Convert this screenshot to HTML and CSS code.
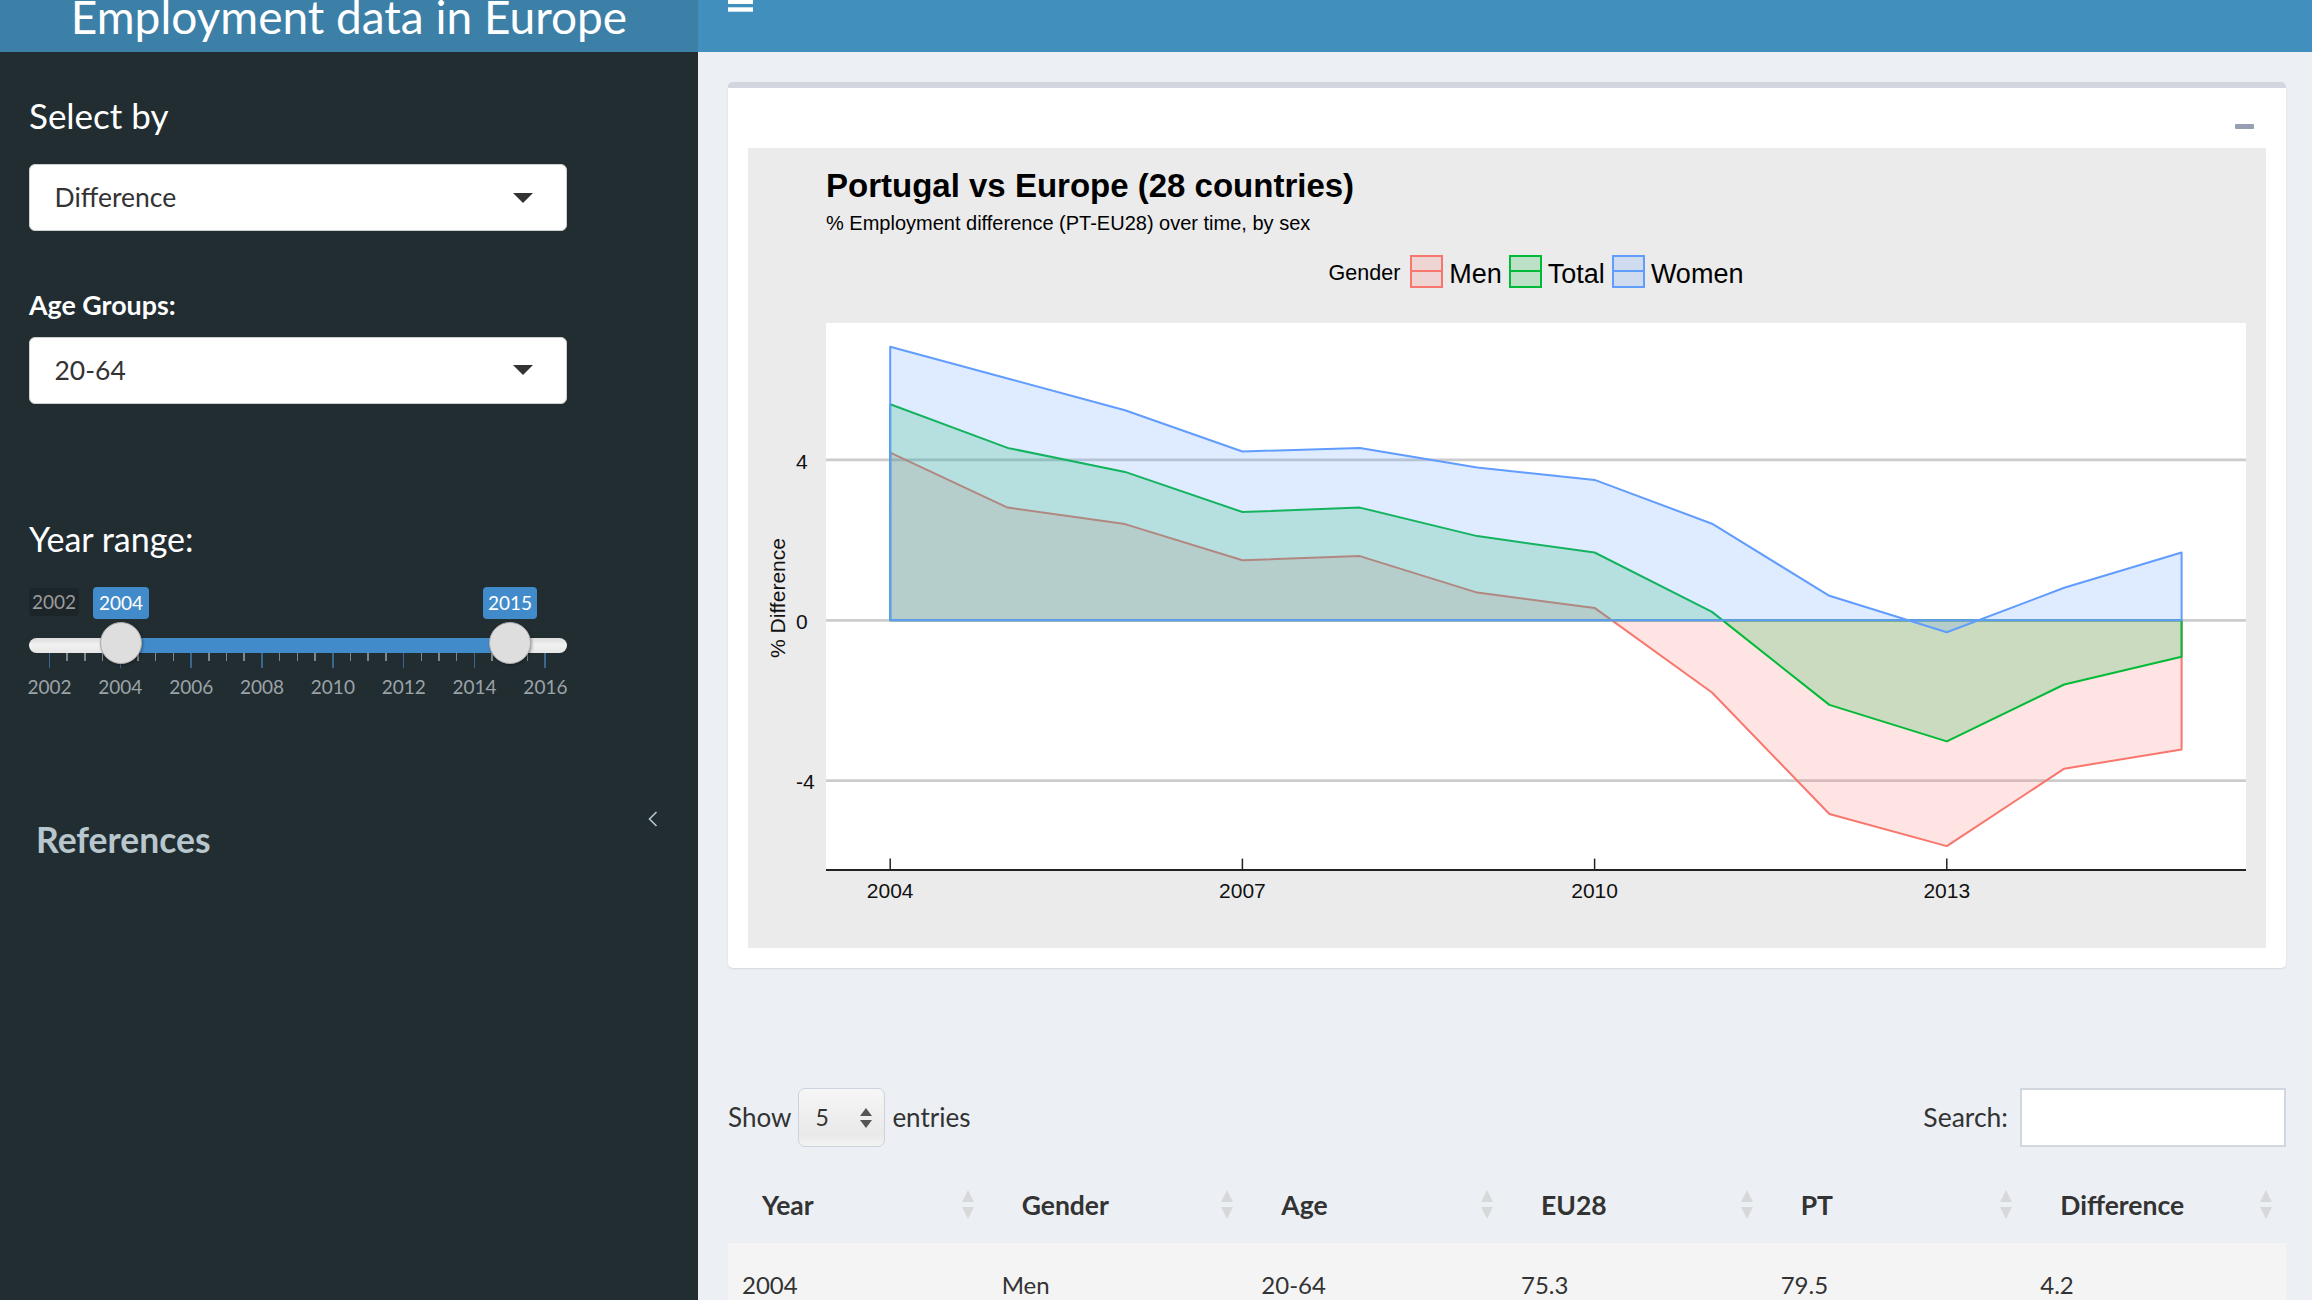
FILE: index.html
```html
<!DOCTYPE html>
<html lang="en">
<head>
<meta charset="utf-8">
<title>Employment data in Europe</title>
<link rel="stylesheet" href="styles.css">
</head>
<body>
<header class="topbar">
  <div class="logo"><span class="logo-text">Employment data in Europe</span></div>
  <nav class="navbar">
    <a class="toggle"><svg width="25" height="12" viewBox="0 0 25 12"><rect x="0" y="0" width="25" height="4" fill="#fff"/><rect x="0" y="7.3" width="25" height="4.4" fill="#fff"/></svg></a>
  </nav>
</header>
<div class="main">
  <aside class="sidebar">
    <div class="lbl-big">Select by</div>
    <div class="select sel-1"><span>Difference</span><span class="caret"></span></div>
    <div class="lbl-bold">Age Groups:</div>
    <div class="select sel-2"><span>20-64</span><span class="caret"></span></div>
    <div class="lbl-range">Year range:</div>
    <div class="slider">
      <span class="irs-min">2002</span>
      <span class="irs-val irs-from">2004</span>
      <span class="irs-val irs-to">2015</span>
      <div class="irs-line"></div>
      <div class="irs-bar"></div>
      <span class="irs-handle h-from"></span>
      <span class="irs-handle h-to"></span>
      <div class="irs-grid">
        <i class="maj"></i><i></i><i></i><i></i>
        <i class="maj"></i><i></i><i></i><i></i>
        <i class="maj"></i><i></i><i></i><i></i>
        <i class="maj"></i><i></i><i></i><i></i>
        <i class="maj"></i><i></i><i></i><i></i>
        <i class="maj"></i><i></i><i></i><i></i>
        <i class="maj"></i><i></i><i></i><i></i>
        <i class="maj"></i>
      </div>
      <div class="irs-grid-text">
        <span>2002</span><span>2004</span><span>2006</span><span>2008</span><span>2010</span><span>2012</span><span>2014</span><span>2016</span>
      </div>
    </div>
    <div class="menu-item">
      <span class="menu-text">References</span>
      <svg class="chev" width="10" height="16" viewBox="0 0 10 16"><polyline points="8.5,1 1.5,8 8.5,15" fill="none" stroke="#b8c7ce" stroke-width="1.6"/></svg>
    </div>
  </aside>
  <main class="content">
    <section class="box">
      <div class="box-header"><span class="btn-minus"></span></div>
      <div class="box-body">
        <div class="plot">
          <div class="plot-title">Portugal vs Europe (28 countries)</div>
          <div class="plot-subtitle">% Employment difference (PT-EU28) over time, by sex</div>
          <div class="legend">
            <span class="legend-title">Gender</span>
            <span class="key key-men"></span><span class="legend-label">Men</span>
            <span class="key key-total"></span><span class="legend-label">Total</span>
            <span class="key key-women"></span><span class="legend-label">Women</span>
          </div>
          <svg class="chart" width="1518" height="648" viewBox="0 0 1518 648">
            <rect x="78" y="23" width="1420" height="547" fill="#ffffff"/>
            <g stroke="#cccccc" stroke-width="2.7">
              <line x1="78" x2="1498" y1="159.9" y2="159.9"/>
              <line x1="78" x2="1498" y1="320.3" y2="320.3"/>
              <line x1="78" x2="1498" y1="480.7" y2="480.7"/>
            </g>
            <g stroke-width="2" stroke-linejoin="round">
              <polygon fill="#F8766D" fill-opacity="0.2" stroke="#F8766D" points="142.2,320.3 142.2,152.7 259.6,207.6 377,224.1 494.4,260.2 611.8,256.1 729.2,292.6 846.6,307.9 964,392.5 1081.4,514 1198.8,546.1 1316.2,468.7 1433.6,449.4 1433.6,320.3"/>
              <polygon fill="#00BA38" fill-opacity="0.2" stroke="#00BA38" points="142.2,320.3 142.2,104.2 259.6,147.9 377,171.9 494.4,212 611.8,207.6 729.2,236.1 846.6,252.5 964,311.9 1081.4,404.9 1198.8,441.4 1316.2,384.5 1433.6,356.8 1433.6,320.3"/>
              <polygon fill="#619CFF" fill-opacity="0.2" stroke="#619CFF" points="142.2,320.3 142.2,46.8 259.6,78.5 377,110.2 494.4,151.5 611.8,147.9 729.2,167.5 846.6,179.9 964,223.7 1081.4,295.8 1198.8,332.3 1316.2,287.8 1433.6,252.5 1433.6,320.3"/>
            </g>
            <line x1="78" x2="1498" y1="570" y2="570" stroke="#222" stroke-width="2"/>
            <g stroke="#222" stroke-width="1.5">
              <line x1="142.2" x2="142.2" y1="558.6" y2="570"/>
              <line x1="494.4" x2="494.4" y1="558.6" y2="570"/>
              <line x1="846.6" x2="846.6" y1="558.6" y2="570"/>
              <line x1="1198.8" x2="1198.8" y1="558.6" y2="570"/>
            </g>
            <g class="axis-text" text-anchor="middle">
              <text x="142.2" y="598">2004</text>
              <text x="494.4" y="598">2007</text>
              <text x="846.6" y="598">2010</text>
              <text x="1198.8" y="598">2013</text>
            </g>
            <g class="axis-text" text-anchor="start">
              <text x="48" y="168.6">4</text>
              <text x="48" y="329">0</text>
              <text x="48" y="489.4">-4</text>
            </g>
            <text class="axis-text" text-anchor="middle" transform="translate(37,298) rotate(-90)">% Difference</text>
          </svg>
        </div>
      </div>
    </section>

    <div class="dt-top">
      <div class="dt-length">
        <span>Show</span>
        <span class="dt-select"><span>5</span><svg width="12" height="20" viewBox="0 0 12 20"><path d="M6 0 L12 8 L0 8 Z" fill="#555"/><path d="M0 12 L12 12 L6 20 Z" fill="#555"/></svg></span>
        <span>entries</span>
      </div>
      <div class="dt-search">
        <span>Search:</span>
        <span class="dt-input"></span>
      </div>
    </div>

    <table class="dt">
      <thead>
        <tr>
          <th><div class="th-in"><span>Year</span><svg class="sort" width="12" height="30" viewBox="0 0 12 30"><path d="M6 0 L12 12 L0 12 Z"/><path d="M0 17 L12 17 L6 29 Z"/></svg></div></th>
          <th><div class="th-in"><span>Gender</span><svg class="sort" width="12" height="30" viewBox="0 0 12 30"><path d="M6 0 L12 12 L0 12 Z"/><path d="M0 17 L12 17 L6 29 Z"/></svg></div></th>
          <th><div class="th-in"><span>Age</span><svg class="sort" width="12" height="30" viewBox="0 0 12 30"><path d="M6 0 L12 12 L0 12 Z"/><path d="M0 17 L12 17 L6 29 Z"/></svg></div></th>
          <th><div class="th-in"><span>EU28</span><svg class="sort" width="12" height="30" viewBox="0 0 12 30"><path d="M6 0 L12 12 L0 12 Z"/><path d="M0 17 L12 17 L6 29 Z"/></svg></div></th>
          <th><div class="th-in"><span>PT</span><svg class="sort" width="12" height="30" viewBox="0 0 12 30"><path d="M6 0 L12 12 L0 12 Z"/><path d="M0 17 L12 17 L6 29 Z"/></svg></div></th>
          <th><div class="th-in"><span>Difference</span><svg class="sort" width="12" height="30" viewBox="0 0 12 30"><path d="M6 0 L12 12 L0 12 Z"/><path d="M0 17 L12 17 L6 29 Z"/></svg></div></th>
        </tr>
      </thead>
      <tbody>
        <tr><td>2004</td><td>Men</td><td>20-64</td><td>75.3</td><td>79.5</td><td>4.2</td></tr>
      </tbody>
    </table>
  </main>
</div>
</body>
</html>
```

FILE: styles.css
```css
html, body {
  margin: 0;
  padding: 0;
}
body {
  width: 2312px;
  height: 1300px;
  overflow: hidden;
  background: #ecf0f5;
  font-family: Lato, "Open Sans", sans-serif;
  color: #333;
}

/* ---------- top bar ---------- */
.topbar {
  display: flex;
  height: 52px;
  overflow: hidden;
}
.logo {
  width: 698px;
  flex: none;
  background: #3c80a8;
  display: flex;
  justify-content: center;
  align-items: flex-start;
}
.logo-text {
  color: #fff;
  font-size: 46px;
  line-height: 1.2;
  margin-top: -11px;
  white-space: nowrap;
}
.navbar {
  flex: 1;
  background: #418fbc;
  padding-left: 30px;
}
.toggle svg {
  display: block;
}

/* ---------- layout ---------- */
.main {
  display: flex;
  height: 1248px;
}
.sidebar {
  width: 698px;
  flex: none;
  box-sizing: border-box;
  background: #222d32;
  padding: 41.5px 0 0 29px;
  color: #fff;
}
.content {
  flex: 1;
  min-width: 0;
  padding: 30px 26px 0 30px;
}

/* ---------- sidebar ---------- */
.lbl-big {
  font-size: 35px;
  line-height: 1.2;
}
.lbl-bold {
  font-size: 26.8px;
  font-weight: 700;
  line-height: 1.2;
  margin-top: 58.4px;
}
.lbl-range {
  font-size: 34px;
  line-height: 1.2;
  margin-top: 114.6px;
}
.select {
  width: 538px;
  height: 67px;
  box-sizing: border-box;
  background: #fff;
  border: 1.5px solid #cfcfcf;
  border-radius: 6px;
  display: flex;
  align-items: center;
  justify-content: space-between;
  padding: 0 33.5px 0 24.5px;
  color: #333;
  font-size: 26.5px;
  line-height: 1.2;
}
.sel-1 {
  margin-top: 28.5px;
}
.sel-2 {
  margin-top: 15.4px;
}
.caret {
  width: 0;
  height: 0;
  border-left: 10px solid transparent;
  border-right: 10px solid transparent;
  border-top: 10px solid #333;
}

/* slider */
.slider {
  position: relative;
  width: 538px;
  height: 125px;
  margin-top: 21.2px;
  padding-top: 72px;
  box-sizing: border-box;
}
.irs-min, .irs-val {
  position: absolute;
  top: 6px;
  height: 32px;
  box-sizing: border-box;
  border-radius: 4px;
  font-size: 19px;
  line-height: 32px;
  text-align: center;
}
.irs-min {
  left: 0;
  top: 7px;
  height: 28px;
  line-height: 28px;
  width: 50px;
  background: rgba(0, 0, 0, 0.16);
  color: #9b9b9b;
}
.irs-val {
  background: #428bca;
  color: #fff;
}
.irs-from {
  left: 64px;
  width: 56px;
}
.irs-to {
  left: 454px;
  width: 54px;
}
.irs-line {
  position: absolute;
  left: 0;
  right: 0;
  top: 57px;
  height: 15px;
  border-radius: 8px;
  background: linear-gradient(#dcdcdc, #f2f2f2 45%, #e6e6e6);
}
.irs-bar {
  position: absolute;
  left: 91.5px;
  width: 389.5px;
  top: 57px;
  height: 15px;
  background: #428bca;
}
.irs-handle {
  position: absolute;
  top: 41px;
  width: 42px;
  height: 42px;
  box-sizing: border-box;
  border-radius: 50%;
  background: #dedede;
  border: 1.5px solid #ababab;
  box-shadow: 1px 1px 3px rgba(0, 0, 0, 0.35);
}
.h-from {
  left: 70.5px;
}
.h-to {
  left: 460px;
}
.irs-grid {
  display: flex;
  justify-content: space-between;
  align-items: flex-start;
  margin-left: 19.75px;
  width: 497.5px;
  height: 15px;
}
.irs-grid i {
  display: block;
  width: 1.5px;
  height: 8px;
  background: #7d878c;
}
.irs-grid i.maj {
  height: 15px;
  background: #39678f;
}
.irs-grid-text {
  display: flex;
  justify-content: space-between;
  margin-left: -4.5px;
  width: 546px;
  margin-top: 8px;
  font-size: 19px;
  line-height: 1.2;
  color: #9ba3a8;
}
.irs-grid-text span {
  width: 50px;
  text-align: center;
}

/* menu */
.menu-item {
  display: flex;
  justify-content: space-between;
  align-items: flex-start;
  margin-top: 113.7px;
  padding: 0 40px 0 7px;
}
.menu-text {
  font-size: 35.5px;
  font-weight: 700;
  line-height: 1.2;
  color: #b8c7ce;
}
.chev {
  display: block;
  margin-top: -8.7px;
}

/* ---------- box ---------- */
.box {
  background: #fff;
  border-top: 6px solid #d2d6de;
  border-radius: 5px;
  box-shadow: 0 1px 2px rgba(0, 0, 0, 0.1);
}
.box-header {
  height: 60px;
  box-sizing: border-box;
  display: flex;
  justify-content: flex-end;
  align-items: flex-start;
  padding: 36px 32px 0 0;
}
.btn-minus {
  display: block;
  width: 19px;
  height: 5px;
  border-radius: 1px;
  background: #97a0b3;
}
.box-body {
  padding: 0 20px 20px;
}
.plot {
  background: #ebebeb;
  height: 800px;
  box-sizing: border-box;
  padding-top: 17.5px;
  font-family: "Liberation Sans", Arial, sans-serif;
  color: #000;
}
.plot-title {
  margin-left: 78px;
  font-size: 33px;
  font-weight: 700;
  line-height: 1.2;
}
.plot-subtitle {
  margin-left: 78px;
  margin-top: 5.5px;
  font-size: 20px;
  line-height: 1.2;
}
.legend {
  margin-left: 78px;
  margin-top: 20.4px;
  width: 1420px;
  height: 33px;
  display: flex;
  justify-content: center;
  align-items: center;
}
.legend-title {
  font-size: 21.5px;
  line-height: 1.2;
  margin-right: 10px;
  padding-top: 4px;
}
.legend-label {
  font-size: 27px;
  line-height: 1.2;
  margin: 0 7px 0 6px;
  padding-top: 5px;
}
.legend-label:last-child {
  margin-right: 0;
}
.key {
  position: relative;
  width: 33px;
  height: 33px;
  box-sizing: border-box;
  border: 2px solid;
}
.key::after {
  content: "";
  position: absolute;
  left: 0;
  right: 0;
  top: 13.5px;
  height: 2px;
  background: currentColor;
}
.key-men {
  color: #F8766D;
  border-color: #F8766D;
  background: rgba(248, 118, 109, 0.2);
}
.key-total {
  color: #00BA38;
  border-color: #00BA38;
  background: rgba(0, 186, 56, 0.2);
}
.key-women {
  color: #619CFF;
  border-color: #619CFF;
  background: rgba(97, 156, 255, 0.2);
}
.chart {
  display: block;
  margin-top: 12px;
}
.axis-text {
  font-family: "Liberation Sans", Arial, sans-serif;
  font-size: 21px;
  fill: #111;
}

/* ---------- data table ---------- */
.dt-top {
  margin-top: 120px;
  height: 59px;
  display: flex;
  justify-content: space-between;
  align-items: center;
  font-size: 26px;
  line-height: 1.2;
  color: #333;
}
.dt-length, .dt-search {
  display: flex;
  align-items: center;
}
.dt-search span:first-child {
  font-size: 26.5px;
}
.dt-select {
  width: 87px;
  height: 59px;
  box-sizing: border-box;
  margin: 0 7px;
  border: 1.5px solid #ccd3dc;
  border-radius: 7px;
  background: linear-gradient(#f6f6f6, #e9e9e9 80%, #f3f3f3);
  display: flex;
  align-items: center;
  justify-content: space-between;
  padding: 0 12px 0 16px;
  font-size: 23px;
}
.dt-select svg {
  display: block;
}
.dt-input {
  display: block;
  width: 266px;
  height: 59px;
  box-sizing: border-box;
  margin-left: 12px;
  background: #fff;
  border: 2px solid #d2d6de;
}
.dt {
  width: 100%;
  margin-top: 21px;
  border-collapse: collapse;
  table-layout: fixed;
  color: #333;
}
.dt th {
  height: 74px;
  padding: 0 14px 0 34px;
  text-align: left;
  font-size: 26.5px;
  font-weight: 700;
}
.th-in {
  display: flex;
  justify-content: space-between;
  align-items: center;
}
.sort {
  display: block;
  fill: #d6d8da;
}
.dt td {
  height: 83px;
  padding: 0 0 0 14px;
  font-size: 24px;
  background: #f4f4f4;
  border-top: 1px solid #eeeeee;
}
```
